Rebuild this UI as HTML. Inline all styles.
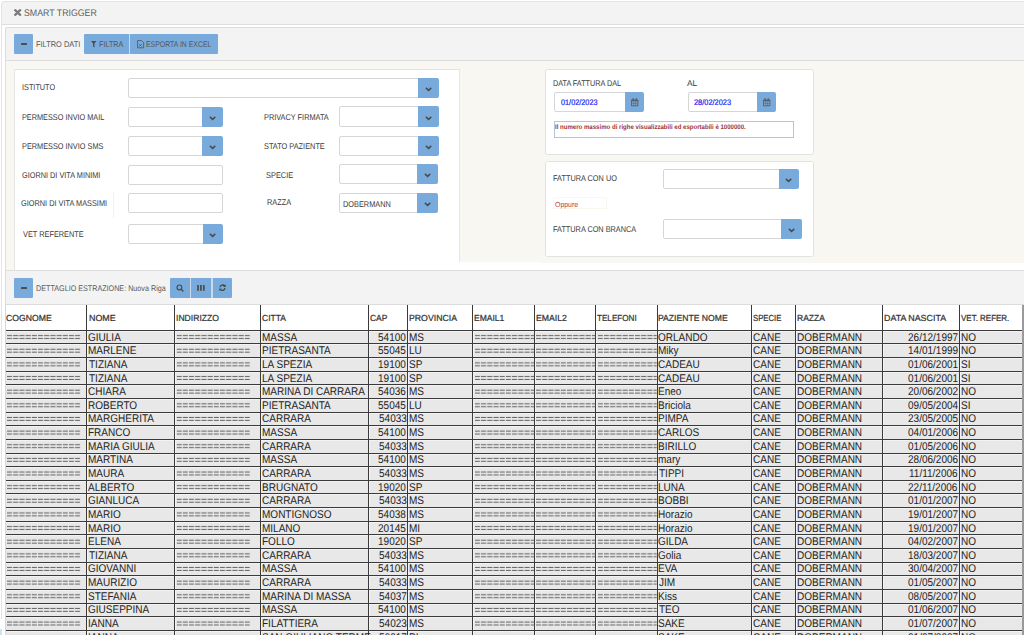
<!DOCTYPE html>
<html><head><meta charset="utf-8"><title>Smart Trigger</title><style>
html,body{margin:0;padding:0}
body{width:1024px;height:635px;overflow:hidden;background:#fff;font-family:"Liberation Sans",sans-serif;position:relative;text-rendering:geometricPrecision}
.a{position:absolute;box-sizing:border-box}
.t{position:absolute;white-space:nowrap;line-height:normal}
svg{position:absolute;overflow:visible}
</style></head><body>
<div class="a" style="left:1.00px;top:1.00px;width:1099.00px;height:24.00px;background:#f3f3f3;border:1px solid #e4e4e4;border-bottom:1px solid #dedede;border-radius:3.5px 0 0 0"></div>
<div class="a" style="left:1.00px;top:25.00px;width:1.00px;height:594.00px;background:#e4e4e4"></div>
<div class="a" style="left:0.00px;top:629.00px;width:2.00px;height:6.00px;background:#cfe3f0"></div>
<svg style="left:13.6px;top:9.3px" width="7.4" height="7" viewBox="0 0 7.4 7"><path d="M1.2 1.2 L6.2 5.8 M6.2 1.2 L1.2 5.8" stroke="#7a7a7a" stroke-width="2.3" stroke-linecap="round"/></svg>
<div class="t" style="left:24.41px;top:8.00px;font-size:9.6px;color:#606060;font-weight:normal;transform:scaleX(0.9171);transform-origin:0 0;">SMART TRIGGER</div>
<div class="a" style="left:5.00px;top:27.00px;width:1095.00px;height:34.00px;background:#f3f3f3;border:1px solid #dcdcdc;border-radius:2px 0 0 0"></div>
<div class="a" style="left:5.00px;top:60.00px;width:1.00px;height:211.00px;background:#dedede"></div>
<div class="a" style="left:6.00px;top:61.00px;width:453.00px;height:210.00px;background:#f8f7f2"></div>
<div class="a" style="left:459.00px;top:61.00px;width:80.00px;height:200.50px;background:#f8f7f2"></div>
<div class="a" style="left:539.00px;top:61.00px;width:485.00px;height:201.50px;background:#f8f7f2"></div>
<div class="a" style="left:13.50px;top:69.20px;width:446.00px;height:201.80px;background:#fff;border:1px solid #e4e4e4;border-bottom:none;border-right:none;border-radius:2px 0 0 0"></div>
<div class="a" style="left:459.00px;top:69.50px;width:1.00px;height:192.00px;background:#e6e6e6"></div>
<div class="a" style="left:14.00px;top:34.00px;width:19.40px;height:19.80px;background:#78abdb;border-radius:1.2px"></div>
<div class="a" style="left:20.60px;top:43.20px;width:6.20px;height:1.80px;background:#4d4d4d;border-radius:0.6px"></div>
<div class="t" style="left:36.46px;top:40.00px;font-size:8.2px;color:#555;font-weight:normal;transform:scaleX(0.9076);transform-origin:0 0;">FILTRO DATI</div>
<div class="a" style="left:84.00px;top:34.00px;width:44.90px;height:19.80px;background:#78abdb;border-radius:1.2px 0 0 1.2px"></div>
<div class="a" style="left:128.90px;top:34.00px;width:1.20px;height:19.80px;background:#c9d9e8"></div>
<div class="a" style="left:130.10px;top:34.00px;width:87.60px;height:19.80px;background:#78abdb;border-radius:0 1.2px 1.2px 0"></div>
<svg style="left:91px;top:40.6px" width="5.6" height="6.4" viewBox="0 0 5.6 6.4"><path d="M0 0 H5.6 L3.5 2.5 V6.4 L2.1 5.5 V2.5 Z" fill="#4d4d4d"/></svg>
<div class="t" style="left:98.57px;top:40.00px;font-size:8.2px;color:#555;font-weight:normal;transform:scaleX(0.8847);transform-origin:0 0;">FILTRA</div>
<svg style="left:136.6px;top:39.6px" width="7.2" height="8.4" viewBox="0 0 7.2 8.4"><path d="M0.55 0.55 H4.5 L6.65 2.7 V7.85 H0.55 Z" fill="none" stroke="#5a5a5a" stroke-width="0.9"/><path d="M2.3 4.1 L4.6 6.6 M4.6 4.1 L2.3 6.6" stroke="#5a5a5a" stroke-width="0.8"/></svg>
<div class="t" style="left:145.56px;top:40.00px;font-size:8.2px;color:#555;font-weight:normal;transform:scaleX(0.8433);transform-origin:0 0;">ESPORTA IN EXCEL</div>
<div class="t" style="left:22.20px;top:82.00px;font-size:8.4px;color:#383838;font-weight:normal;transform:scaleX(0.8719);transform-origin:0 0;">ISTITUTO</div>
<div class="a" style="left:127.80px;top:78.20px;width:291.60px;height:19.60px;background:#fff;border:1px solid #d6d6d6;border-radius:2px 0 0 2px"></div>
<div class="a" style="left:418.40px;top:78.20px;width:20.50px;height:19.60px;background:#78abdb;border-radius:0 2px 2px 0"></div>
<svg style="left:425.05px;top:86.80px" width="7.2" height="4.4" viewBox="0 0 7.2 4.4"><path d="M0.9 0.9 L3.6 3.4 L6.3 0.9" fill="none" stroke="#4a4a4a" stroke-width="1.45"/></svg>
<div class="t" style="left:22.36px;top:112.00px;font-size:8.4px;color:#383838;font-weight:normal;transform:scaleX(0.8713);transform-origin:0 0;">PERMESSO INVIO MAIL</div>
<div class="a" style="left:127.80px;top:106.70px;width:75.10px;height:20.30px;background:#fff;border:1px solid #d6d6d6;border-radius:2px 0 0 2px"></div>
<div class="a" style="left:201.90px;top:106.70px;width:20.90px;height:20.30px;background:#78abdb;border-radius:0 2px 2px 0"></div>
<svg style="left:208.75px;top:115.65px" width="7.2" height="4.4" viewBox="0 0 7.2 4.4"><path d="M0.9 0.9 L3.6 3.4 L6.3 0.9" fill="none" stroke="#4a4a4a" stroke-width="1.45"/></svg>
<div class="t" style="left:22.26px;top:141.00px;font-size:8.4px;color:#383838;font-weight:normal;transform:scaleX(0.8742);transform-origin:0 0;">PERMESSO INVIO SMS</div>
<div class="a" style="left:127.80px;top:136.00px;width:75.10px;height:20.10px;background:#fff;border:1px solid #d6d6d6;border-radius:2px 0 0 2px"></div>
<div class="a" style="left:201.90px;top:136.00px;width:20.90px;height:20.10px;background:#78abdb;border-radius:0 2px 2px 0"></div>
<svg style="left:208.75px;top:144.85px" width="7.2" height="4.4" viewBox="0 0 7.2 4.4"><path d="M0.9 0.9 L3.6 3.4 L6.3 0.9" fill="none" stroke="#4a4a4a" stroke-width="1.45"/></svg>
<div class="t" style="left:22.46px;top:170.00px;font-size:8.4px;color:#383838;font-weight:normal;transform:scaleX(0.8746);transform-origin:0 0;">GIORNI DI VITA MINIMI</div>
<div class="a" style="left:127.80px;top:165.10px;width:95.20px;height:20.20px;background:#fff;border:1px solid #d6d6d6;border-radius:2px"></div>
<div class="t" style="left:21.45px;top:198.00px;font-size:8.4px;color:#383838;font-weight:normal;transform:scaleX(0.8778);transform-origin:0 0;">GIORNI DI VITA MASSIMI</div>
<div class="a" style="left:112.60px;top:192.00px;width:1.00px;height:25.50px;background:#f2f0e8"></div>
<div class="a" style="left:127.80px;top:193.30px;width:95.20px;height:20.20px;background:#fff;border:1px solid #d6d6d6;border-radius:2px"></div>
<div class="t" style="left:23.16px;top:229.00px;font-size:8.4px;color:#383838;font-weight:normal;transform:scaleX(0.8769);transform-origin:0 0;">VET REFERENTE</div>
<div class="a" style="left:128.30px;top:224.30px;width:75.50px;height:20.20px;background:#fff;border:1px solid #d6d6d6;border-radius:2px 0 0 2px"></div>
<div class="a" style="left:202.80px;top:224.30px;width:20.10px;height:20.20px;background:#78abdb;border-radius:0 2px 2px 0"></div>
<svg style="left:209.25px;top:233.20px" width="7.2" height="4.4" viewBox="0 0 7.2 4.4"><path d="M0.9 0.9 L3.6 3.4 L6.3 0.9" fill="none" stroke="#4a4a4a" stroke-width="1.45"/></svg>
<div class="t" style="left:263.86px;top:112.00px;font-size:8.4px;color:#383838;font-weight:normal;transform:scaleX(0.8771);transform-origin:0 0;">PRIVACY FIRMATA</div>
<div class="a" style="left:338.70px;top:106.30px;width:80.00px;height:20.80px;background:#fff;border:1px solid #d6d6d6;border-radius:2px 0 0 2px"></div>
<div class="a" style="left:417.70px;top:106.30px;width:21.20px;height:20.80px;background:#78abdb;border-radius:0 2px 2px 0"></div>
<svg style="left:424.70px;top:115.50px" width="7.2" height="4.4" viewBox="0 0 7.2 4.4"><path d="M0.9 0.9 L3.6 3.4 L6.3 0.9" fill="none" stroke="#4a4a4a" stroke-width="1.45"/></svg>
<div class="t" style="left:263.74px;top:141.00px;font-size:8.4px;color:#383838;font-weight:normal;transform:scaleX(0.8786);transform-origin:0 0;">STATO PAZIENTE</div>
<div class="a" style="left:338.70px;top:136.20px;width:80.00px;height:19.90px;background:#fff;border:1px solid #d6d6d6;border-radius:2px 0 0 2px"></div>
<div class="a" style="left:417.70px;top:136.20px;width:21.20px;height:19.90px;background:#78abdb;border-radius:0 2px 2px 0"></div>
<svg style="left:424.70px;top:144.95px" width="7.2" height="4.4" viewBox="0 0 7.2 4.4"><path d="M0.9 0.9 L3.6 3.4 L6.3 0.9" fill="none" stroke="#4a4a4a" stroke-width="1.45"/></svg>
<div class="t" style="left:266.03px;top:170.00px;font-size:8.4px;color:#383838;font-weight:normal;transform:scaleX(0.8872);transform-origin:0 0;">SPECIE</div>
<div class="a" style="left:338.60px;top:164.40px;width:79.10px;height:20.10px;background:#fff;border:1px solid #d6d6d6;border-radius:2px 0 0 2px"></div>
<div class="a" style="left:416.70px;top:164.40px;width:21.20px;height:20.10px;background:#78abdb;border-radius:0 2px 2px 0"></div>
<svg style="left:423.70px;top:173.25px" width="7.2" height="4.4" viewBox="0 0 7.2 4.4"><path d="M0.9 0.9 L3.6 3.4 L6.3 0.9" fill="none" stroke="#4a4a4a" stroke-width="1.45"/></svg>
<div class="t" style="left:267.35px;top:197.00px;font-size:8.4px;color:#383838;font-weight:normal;transform:scaleX(0.8810);transform-origin:0 0;">RAZZA</div>
<div class="a" style="left:338.60px;top:192.80px;width:79.10px;height:20.70px;background:#fff;border:1px solid #d6d6d6;border-radius:2px 0 0 2px"></div>
<div class="a" style="left:416.70px;top:192.80px;width:21.20px;height:20.70px;background:#78abdb;border-radius:0 2px 2px 0"></div>
<svg style="left:423.70px;top:201.95px" width="7.2" height="4.4" viewBox="0 0 7.2 4.4"><path d="M0.9 0.9 L3.6 3.4 L6.3 0.9" fill="none" stroke="#4a4a4a" stroke-width="1.45"/></svg>
<div class="t" style="left:343.26px;top:199.00px;font-size:8.4px;color:#383838;font-weight:normal;transform:scaleX(0.8778);transform-origin:0 0;">DOBERMANN</div>
<div class="a" style="left:545.00px;top:69.30px;width:268.60px;height:85.30px;background:#fff;border:1px solid #e2e2e2;border-radius:2.5px"></div>
<div class="t" style="left:553.46px;top:78.00px;font-size:8.4px;color:#383838;font-weight:normal;transform:scaleX(0.8648);transform-origin:0 0;">DATA FATTURA DAL</div>
<div class="a" style="left:553.60px;top:92.00px;width:72.00px;height:19.70px;background:#fff;border:1px solid #d6d6d6;border-radius:2px 0 0 2px"></div>
<div class="a" style="left:624.60px;top:92.00px;width:19.90px;height:19.70px;background:#78abdb;border-radius:0 2px 2px 0"></div>
<svg style="left:630.85px;top:97.75px" width="7.4" height="8.2" viewBox="0 0 7.4 8.2"><rect x="0" y="1.5" width="7.4" height="6.7" rx="0.7" fill="#56606c"/><rect x="0.9" y="3.3" width="5.6" height="4.0" fill="#86a9cc"/><path d="M0.9 5.3 H6.5 M2.75 3.3 V7.3 M4.65 3.3 V7.3" stroke="#56606c" stroke-width="0.55"/><rect x="1.5" y="0.1" width="1.1" height="2.2" rx="0.4" fill="#56606c"/><rect x="4.8" y="0.1" width="1.1" height="2.2" rx="0.4" fill="#56606c"/></svg>
<div class="t" style="left:560.96px;top:98.00px;font-size:8.0px;color:#1a1cf2;font-weight:normal;transform:scaleX(0.9125);transform-origin:0 0;-webkit-text-stroke:0.2px #1a1cf2;">01/02/2023</div>
<div class="t" style="left:686.91px;top:78.00px;font-size:8.4px;color:#383838;font-weight:normal;">AL</div>
<div class="a" style="left:687.60px;top:92.00px;width:70.00px;height:19.70px;background:#fff;border:1px solid #d6d6d6;border-radius:2px 0 0 2px"></div>
<div class="a" style="left:756.60px;top:92.00px;width:19.50px;height:19.70px;background:#78abdb;border-radius:0 2px 2px 0"></div>
<svg style="left:762.65px;top:97.75px" width="7.4" height="8.2" viewBox="0 0 7.4 8.2"><rect x="0" y="1.5" width="7.4" height="6.7" rx="0.7" fill="#56606c"/><rect x="0.9" y="3.3" width="5.6" height="4.0" fill="#86a9cc"/><path d="M0.9 5.3 H6.5 M2.75 3.3 V7.3 M4.65 3.3 V7.3" stroke="#56606c" stroke-width="0.55"/><rect x="1.5" y="0.1" width="1.1" height="2.2" rx="0.4" fill="#56606c"/><rect x="4.8" y="0.1" width="1.1" height="2.2" rx="0.4" fill="#56606c"/></svg>
<div class="t" style="left:694.49px;top:98.00px;font-size:8.0px;color:#1a1cf2;font-weight:normal;transform:scaleX(0.9245);transform-origin:0 0;-webkit-text-stroke:0.2px #1a1cf2;">28/02/2023</div>
<div class="a" style="left:553.60px;top:121.10px;width:240.20px;height:16.50px;background:#fff;border:1px solid #afc6de"></div>
<div class="t" style="left:555.49px;top:124.00px;font-size:6.6px;color:#a03535;font-weight:bold;transform:scaleX(0.9196);transform-origin:0 0;">Il numero massimo di righe visualizzabili ed esportabili è 1000000.</div>
<div class="a" style="left:544.80px;top:160.60px;width:269.40px;height:96.30px;background:#fff;border:1px solid #e2e2e2;border-radius:2.5px"></div>
<div class="t" style="left:552.53px;top:173.00px;font-size:8.4px;color:#383838;font-weight:normal;transform:scaleX(0.8767);transform-origin:0 0;">FATTURA CON UO</div>
<div class="a" style="left:662.60px;top:168.90px;width:117.00px;height:19.70px;background:#fff;border:1px solid #d6d6d6;border-radius:2px 0 0 2px"></div>
<div class="a" style="left:778.60px;top:168.90px;width:20.90px;height:19.70px;background:#78abdb;border-radius:0 2px 2px 0"></div>
<svg style="left:785.45px;top:177.55px" width="7.2" height="4.4" viewBox="0 0 7.2 4.4"><path d="M0.9 0.9 L3.6 3.4 L6.3 0.9" fill="none" stroke="#4a4a4a" stroke-width="1.45"/></svg>
<div class="a" style="left:552.60px;top:197.30px;width:54.80px;height:12.10px;background:#fff;border:1px solid #faf7ef"></div>
<div class="t" style="left:554.70px;top:200.00px;font-size:7.4px;color:#b04444;font-weight:normal;transform:scaleX(0.9383);transform-origin:0 0;">Oppure</div>
<div class="t" style="left:552.53px;top:224.00px;font-size:8.4px;color:#383838;font-weight:normal;transform:scaleX(0.8727);transform-origin:0 0;">FATTURA CON BRANCA</div>
<div class="a" style="left:662.60px;top:218.90px;width:119.00px;height:20.20px;background:#fff;border:1px solid #d6d6d6;border-radius:2px 0 0 2px"></div>
<div class="a" style="left:780.60px;top:218.90px;width:21.90px;height:20.20px;background:#78abdb;border-radius:0 2px 2px 0"></div>
<svg style="left:787.95px;top:227.80px" width="7.2" height="4.4" viewBox="0 0 7.2 4.4"><path d="M0.9 0.9 L3.6 3.4 L6.3 0.9" fill="none" stroke="#4a4a4a" stroke-width="1.45"/></svg>
<div class="a" style="left:5.00px;top:270.20px;width:1095.00px;height:34.60px;background:#f3f3f3;border:1px solid #dcdcdc;border-top:1.6px solid #dfdfdf"></div>
<div class="a" style="left:14.00px;top:278.00px;width:19.40px;height:19.60px;background:#78abdb;border-radius:1.2px"></div>
<div class="a" style="left:20.60px;top:287.10px;width:6.20px;height:1.80px;background:#4d4d4d;border-radius:0.6px"></div>
<div class="t" style="left:36.39px;top:284.00px;font-size:8.2px;color:#5a5a5a;font-weight:normal;transform:scaleX(0.8783);transform-origin:0 0;">DETTAGLIO ESTRAZIONE: Nuova Riga</div>
<div class="a" style="left:169.90px;top:277.90px;width:19.70px;height:19.70px;background:#78abdb;border-radius:1.2px 0 0 1.2px"></div>
<div class="a" style="left:189.60px;top:277.90px;width:1.30px;height:19.70px;background:#c9d9e8"></div>
<div class="a" style="left:211.10px;top:277.90px;width:1.50px;height:19.70px;background:#c9d9e8"></div>
<div class="a" style="left:190.90px;top:277.90px;width:20.20px;height:19.70px;background:#78abdb;border-radius:0"></div>
<div class="a" style="left:212.60px;top:277.90px;width:19.40px;height:19.70px;background:#78abdb;border-radius:0 1.2px 1.2px 0"></div>
<svg style="left:175.6px;top:284.2px" width="8" height="8" viewBox="0 0 8 8"><circle cx="3.4" cy="3.4" r="2.4" fill="none" stroke="#4a4a4a" stroke-width="1.15"/><path d="M5.2 5.2 L7.0 7.0" stroke="#4a4a4a" stroke-width="1.4" stroke-linecap="round"/></svg>
<svg style="left:197px;top:285px" width="8" height="5.8" viewBox="0 0 8 5.8"><rect x="0.1" y="0" width="1.8" height="5.8" fill="#505050"/><rect x="3.0" y="0" width="1.8" height="5.8" fill="#505050"/><rect x="5.95" y="0" width="1.8" height="5.8" fill="#505050"/></svg>
<svg style="left:218.6px;top:284.3px" width="7" height="7.4" viewBox="0 0 7 7.4"><path d="M1.0 3.3 A2.6 2.6 0 0 1 5.7 2.1" fill="none" stroke="#464646" stroke-width="1.3"/><path d="M6.0 4.1 A2.6 2.6 0 0 1 1.3 5.3" fill="none" stroke="#464646" stroke-width="1.3"/><path d="M4.2 2.7 L6.8 2.9 L6.6 0.3 Z" fill="#464646"/><path d="M2.8 4.7 L0.2 4.5 L0.4 7.1 Z" fill="#464646"/></svg>
<div class="a" style="left:5.00px;top:304.60px;width:1017.20px;height:330.40px;background:#fff"></div>
<div class="a" style="left:5.00px;top:330.30px;width:1017.20px;height:315.72px;background:#e8e8e8"></div>
<div class="a" style="left:5.00px;top:330.80px;width:1017.20px;height:1.00px;background:#f3f3f3"></div>
<div class="a" style="left:5.00px;top:344.44px;width:1017.20px;height:1.00px;background:#f3f3f3"></div>
<div class="a" style="left:5.00px;top:358.08px;width:1017.20px;height:1.00px;background:#f3f3f3"></div>
<div class="a" style="left:5.00px;top:371.72px;width:1017.20px;height:1.00px;background:#f3f3f3"></div>
<div class="a" style="left:5.00px;top:385.36px;width:1017.20px;height:1.00px;background:#f3f3f3"></div>
<div class="a" style="left:5.00px;top:399.00px;width:1017.20px;height:1.00px;background:#f3f3f3"></div>
<div class="a" style="left:5.00px;top:412.64px;width:1017.20px;height:1.00px;background:#f3f3f3"></div>
<div class="a" style="left:5.00px;top:426.28px;width:1017.20px;height:1.00px;background:#f3f3f3"></div>
<div class="a" style="left:5.00px;top:439.92px;width:1017.20px;height:1.00px;background:#f3f3f3"></div>
<div class="a" style="left:5.00px;top:453.56px;width:1017.20px;height:1.00px;background:#f3f3f3"></div>
<div class="a" style="left:5.00px;top:467.20px;width:1017.20px;height:1.00px;background:#f3f3f3"></div>
<div class="a" style="left:5.00px;top:480.84px;width:1017.20px;height:1.00px;background:#f3f3f3"></div>
<div class="a" style="left:5.00px;top:494.48px;width:1017.20px;height:1.00px;background:#f3f3f3"></div>
<div class="a" style="left:5.00px;top:508.12px;width:1017.20px;height:1.00px;background:#f3f3f3"></div>
<div class="a" style="left:5.00px;top:521.76px;width:1017.20px;height:1.00px;background:#f3f3f3"></div>
<div class="a" style="left:5.00px;top:535.40px;width:1017.20px;height:1.00px;background:#f3f3f3"></div>
<div class="a" style="left:5.00px;top:549.04px;width:1017.20px;height:1.00px;background:#f3f3f3"></div>
<div class="a" style="left:5.00px;top:562.68px;width:1017.20px;height:1.00px;background:#f3f3f3"></div>
<div class="a" style="left:5.00px;top:576.32px;width:1017.20px;height:1.00px;background:#f3f3f3"></div>
<div class="a" style="left:5.00px;top:589.96px;width:1017.20px;height:1.00px;background:#f3f3f3"></div>
<div class="a" style="left:5.00px;top:603.60px;width:1017.20px;height:1.00px;background:#f3f3f3"></div>
<div class="a" style="left:5.00px;top:617.24px;width:1017.20px;height:1.00px;background:#f3f3f3"></div>
<div class="a" style="left:5.00px;top:630.88px;width:1017.20px;height:1.00px;background:#f3f3f3"></div>
<div class="a" style="left:87.30px;top:330.30px;width:1.00px;height:304.70px;background:#f3f3f3"></div>
<div class="a" style="left:175.00px;top:330.30px;width:1.00px;height:304.70px;background:#f3f3f3"></div>
<div class="a" style="left:261.00px;top:330.30px;width:1.00px;height:304.70px;background:#f3f3f3"></div>
<div class="a" style="left:369.00px;top:330.30px;width:1.00px;height:304.70px;background:#f3f3f3"></div>
<div class="a" style="left:408.10px;top:330.30px;width:1.00px;height:304.70px;background:#f3f3f3"></div>
<div class="a" style="left:473.10px;top:330.30px;width:1.00px;height:304.70px;background:#f3f3f3"></div>
<div class="a" style="left:535.10px;top:330.30px;width:1.00px;height:304.70px;background:#f3f3f3"></div>
<div class="a" style="left:596.00px;top:330.30px;width:1.00px;height:304.70px;background:#f3f3f3"></div>
<div class="a" style="left:657.70px;top:330.30px;width:1.00px;height:304.70px;background:#f3f3f3"></div>
<div class="a" style="left:752.20px;top:330.30px;width:1.00px;height:304.70px;background:#f3f3f3"></div>
<div class="a" style="left:796.00px;top:330.30px;width:1.00px;height:304.70px;background:#f3f3f3"></div>
<div class="a" style="left:883.00px;top:330.30px;width:1.00px;height:304.70px;background:#f3f3f3"></div>
<div class="a" style="left:959.90px;top:330.30px;width:1.00px;height:304.70px;background:#f3f3f3"></div>
<div class="a" style="left:5.00px;top:329.80px;width:1017.20px;height:1.00px;background:#3a3a3a"></div>
<div class="a" style="left:5.00px;top:343.44px;width:1017.20px;height:1.00px;background:#3a3a3a"></div>
<div class="a" style="left:5.00px;top:357.08px;width:1017.20px;height:1.00px;background:#3a3a3a"></div>
<div class="a" style="left:5.00px;top:370.72px;width:1017.20px;height:1.00px;background:#3a3a3a"></div>
<div class="a" style="left:5.00px;top:384.36px;width:1017.20px;height:1.00px;background:#3a3a3a"></div>
<div class="a" style="left:5.00px;top:398.00px;width:1017.20px;height:1.00px;background:#3a3a3a"></div>
<div class="a" style="left:5.00px;top:411.64px;width:1017.20px;height:1.00px;background:#3a3a3a"></div>
<div class="a" style="left:5.00px;top:425.28px;width:1017.20px;height:1.00px;background:#3a3a3a"></div>
<div class="a" style="left:5.00px;top:438.92px;width:1017.20px;height:1.00px;background:#3a3a3a"></div>
<div class="a" style="left:5.00px;top:452.56px;width:1017.20px;height:1.00px;background:#3a3a3a"></div>
<div class="a" style="left:5.00px;top:466.20px;width:1017.20px;height:1.00px;background:#3a3a3a"></div>
<div class="a" style="left:5.00px;top:479.84px;width:1017.20px;height:1.00px;background:#3a3a3a"></div>
<div class="a" style="left:5.00px;top:493.48px;width:1017.20px;height:1.00px;background:#3a3a3a"></div>
<div class="a" style="left:5.00px;top:507.12px;width:1017.20px;height:1.00px;background:#3a3a3a"></div>
<div class="a" style="left:5.00px;top:520.76px;width:1017.20px;height:1.00px;background:#3a3a3a"></div>
<div class="a" style="left:5.00px;top:534.40px;width:1017.20px;height:1.00px;background:#3a3a3a"></div>
<div class="a" style="left:5.00px;top:548.04px;width:1017.20px;height:1.00px;background:#3a3a3a"></div>
<div class="a" style="left:5.00px;top:561.68px;width:1017.20px;height:1.00px;background:#3a3a3a"></div>
<div class="a" style="left:5.00px;top:575.32px;width:1017.20px;height:1.00px;background:#3a3a3a"></div>
<div class="a" style="left:5.00px;top:588.96px;width:1017.20px;height:1.00px;background:#3a3a3a"></div>
<div class="a" style="left:5.00px;top:602.60px;width:1017.20px;height:1.00px;background:#3a3a3a"></div>
<div class="a" style="left:5.00px;top:616.24px;width:1017.20px;height:1.00px;background:#3a3a3a"></div>
<div class="a" style="left:5.00px;top:629.88px;width:1017.20px;height:1.00px;background:#3a3a3a"></div>
<div class="a" style="left:5.00px;top:643.52px;width:1017.20px;height:1.00px;background:#3a3a3a"></div>
<div class="a" style="left:86.30px;top:304.60px;width:1.00px;height:330.40px;background:#3a3a3a"></div>
<div class="a" style="left:174.00px;top:304.60px;width:1.00px;height:330.40px;background:#3a3a3a"></div>
<div class="a" style="left:260.00px;top:304.60px;width:1.00px;height:330.40px;background:#3a3a3a"></div>
<div class="a" style="left:368.00px;top:304.60px;width:1.00px;height:330.40px;background:#3a3a3a"></div>
<div class="a" style="left:407.10px;top:304.60px;width:1.00px;height:330.40px;background:#3a3a3a"></div>
<div class="a" style="left:472.10px;top:304.60px;width:1.00px;height:330.40px;background:#3a3a3a"></div>
<div class="a" style="left:534.10px;top:304.60px;width:1.00px;height:330.40px;background:#3a3a3a"></div>
<div class="a" style="left:595.00px;top:304.60px;width:1.00px;height:330.40px;background:#3a3a3a"></div>
<div class="a" style="left:656.70px;top:304.60px;width:1.00px;height:330.40px;background:#3a3a3a"></div>
<div class="a" style="left:751.20px;top:304.60px;width:1.00px;height:330.40px;background:#3a3a3a"></div>
<div class="a" style="left:795.00px;top:304.60px;width:1.00px;height:330.40px;background:#3a3a3a"></div>
<div class="a" style="left:882.00px;top:304.60px;width:1.00px;height:330.40px;background:#3a3a3a"></div>
<div class="a" style="left:958.90px;top:304.60px;width:1.00px;height:330.40px;background:#3a3a3a"></div>
<div class="a" style="left:5.00px;top:304.60px;width:1.00px;height:330.40px;background:#d6d6d6"></div>
<div class="a" style="left:1022.20px;top:304.60px;width:1.80px;height:330.40px;background:#9a9a9a"></div>
<svg style="left:0;top:0" width="1024" height="635" viewBox="0 0 1024 635"><defs><pattern id="eq" patternUnits="userSpaceOnUse" x="0" y="0" width="6.2" height="13.64"><rect x="0" y="4.8" width="5.1" height="0.95" fill="#5a5a5a"/><rect x="0" y="7.7" width="5.1" height="0.95" fill="#5a5a5a"/></pattern></defs><g transform="translate(7.00,330.30)"><rect x="0" y="0" width="73.30" height="313.72" fill="url(#eq)"/></g><g transform="translate(176.60,330.30)"><rect x="0" y="0" width="73.30" height="313.72" fill="url(#eq)"/></g><g transform="translate(474.90,330.30)"><rect x="0" y="0" width="59.20" height="313.72" fill="url(#eq)"/></g><g transform="translate(536.00,330.30)"><rect x="0" y="0" width="59.00" height="313.72" fill="url(#eq)"/></g><g transform="translate(597.80,330.30)"><rect x="0" y="0" width="58.90" height="313.72" fill="url(#eq)"/></g></svg>
<div class="t" style="left:6.25px;top:313.00px;font-size:8.8px;color:#333;font-weight:normal;transform:scaleX(0.9835);transform-origin:0 0;-webkit-text-stroke:0.22px #333;">COGNOME</div>
<div class="t" style="left:88.56px;top:313.00px;font-size:8.8px;color:#333;font-weight:normal;transform:scaleX(1.0090);transform-origin:0 0;-webkit-text-stroke:0.22px #333;">NOME</div>
<div class="t" style="left:175.77px;top:313.00px;font-size:8.8px;color:#333;font-weight:normal;transform:scaleX(0.9778);transform-origin:0 0;-webkit-text-stroke:0.22px #333;">INDIRIZZO</div>
<div class="t" style="left:261.76px;top:313.00px;font-size:8.8px;color:#333;font-weight:normal;transform:scaleX(0.9697);transform-origin:0 0;-webkit-text-stroke:0.22px #333;">CITTA</div>
<div class="t" style="left:369.76px;top:313.00px;font-size:8.8px;color:#333;font-weight:normal;transform:scaleX(0.9634);transform-origin:0 0;-webkit-text-stroke:0.22px #333;">CAP</div>
<div class="t" style="left:409.22px;top:313.00px;font-size:8.8px;color:#333;font-weight:normal;transform:scaleX(0.9917);transform-origin:0 0;-webkit-text-stroke:0.22px #333;">PROVINCIA</div>
<div class="t" style="left:473.80px;top:313.00px;font-size:8.8px;color:#333;font-weight:normal;transform:scaleX(0.9700);transform-origin:0 0;-webkit-text-stroke:0.22px #333;">EMAIL1</div>
<div class="t" style="left:535.64px;top:313.00px;font-size:8.8px;color:#333;font-weight:normal;transform:scaleX(0.9894);transform-origin:0 0;-webkit-text-stroke:0.22px #333;">EMAIL2</div>
<div class="t" style="left:597.09px;top:313.00px;font-size:8.8px;color:#333;font-weight:normal;transform:scaleX(0.9224);transform-origin:0 0;-webkit-text-stroke:0.22px #333;">TELEFONI</div>
<div class="t" style="left:658.43px;top:313.00px;font-size:8.8px;color:#333;font-weight:normal;transform:scaleX(0.9789);transform-origin:0 0;-webkit-text-stroke:0.22px #333;">PAZIENTE NOME</div>
<div class="t" style="left:753.12px;top:313.00px;font-size:8.8px;color:#333;font-weight:normal;transform:scaleX(0.8808);transform-origin:0 0;-webkit-text-stroke:0.22px #333;">SPECIE</div>
<div class="t" style="left:796.74px;top:313.00px;font-size:8.8px;color:#333;font-weight:normal;transform:scaleX(0.9700);transform-origin:0 0;-webkit-text-stroke:0.22px #333;">RAZZA</div>
<div class="t" style="left:883.81px;top:313.00px;font-size:8.8px;color:#333;font-weight:normal;transform:scaleX(1.0077);transform-origin:0 0;-webkit-text-stroke:0.22px #333;">DATA NASCITA</div>
<div class="t" style="left:961.14px;top:313.00px;font-size:8.8px;color:#333;font-weight:normal;transform:scaleX(0.9067);transform-origin:0 0;-webkit-text-stroke:0.22px #333;">VET. REFER.</div>
<div class="t" style="left:88.27px;top:332.00px;font-size:11.2px;color:#242424;font-weight:normal;transform:scaleX(0.8950);transform-origin:0 0;">GIULIA</div>
<div class="t" style="left:261.69px;top:332.00px;font-size:11.2px;color:#242424;font-weight:normal;transform:scaleX(0.8950);transform-origin:0 0;">MASSA</div>
<div class="t" style="left:378.21px;top:332.00px;font-size:11.2px;color:#242424;font-weight:normal;transform:scaleX(0.8950);transform-origin:0 0;">54100</div>
<div class="t" style="left:408.89px;top:332.00px;font-size:11.2px;color:#242424;font-weight:normal;transform:scaleX(0.8950);transform-origin:0 0;">MS</div>
<div class="t" style="left:658.49px;top:332.00px;font-size:11.2px;color:#242424;font-weight:normal;transform:scaleX(0.8950);transform-origin:0 0;">ORLANDO</div>
<div class="t" style="left:753.07px;top:332.00px;font-size:11.2px;color:#242424;font-weight:normal;transform:scaleX(0.8950);transform-origin:0 0;">CANE</div>
<div class="t" style="left:796.97px;top:332.00px;font-size:11.2px;color:#242424;font-weight:normal;transform:scaleX(0.8950);transform-origin:0 0;">DOBERMANN</div>
<div class="t" style="left:907.81px;top:332.00px;font-size:11.2px;color:#242424;font-weight:normal;transform:scaleX(0.8950);transform-origin:0 0;">26/12/1997</div>
<div class="t" style="left:960.99px;top:332.00px;font-size:11.2px;color:#242424;font-weight:normal;transform:scaleX(0.8950);transform-origin:0 0;">NO</div>
<div class="t" style="left:88.19px;top:345.00px;font-size:11.2px;color:#242424;font-weight:normal;transform:scaleX(0.8950);transform-origin:0 0;">MARLENE</div>
<div class="t" style="left:261.67px;top:345.00px;font-size:11.2px;color:#242424;font-weight:normal;transform:scaleX(0.8950);transform-origin:0 0;">PIETRASANTA</div>
<div class="t" style="left:378.22px;top:345.00px;font-size:11.2px;color:#242424;font-weight:normal;transform:scaleX(0.8950);transform-origin:0 0;">55045</div>
<div class="t" style="left:408.88px;top:345.00px;font-size:11.2px;color:#242424;font-weight:normal;transform:scaleX(0.8950);transform-origin:0 0;">LU</div>
<div class="t" style="left:658.39px;top:345.00px;font-size:11.2px;color:#242424;font-weight:normal;transform:scaleX(0.8950);transform-origin:0 0;">Miky</div>
<div class="t" style="left:753.07px;top:345.00px;font-size:11.2px;color:#242424;font-weight:normal;transform:scaleX(0.8950);transform-origin:0 0;">CANE</div>
<div class="t" style="left:796.97px;top:345.00px;font-size:11.2px;color:#242424;font-weight:normal;transform:scaleX(0.8950);transform-origin:0 0;">DOBERMANN</div>
<div class="t" style="left:907.71px;top:345.00px;font-size:11.2px;color:#242424;font-weight:normal;transform:scaleX(0.8950);transform-origin:0 0;">14/01/1999</div>
<div class="t" style="left:960.99px;top:345.00px;font-size:11.2px;color:#242424;font-weight:normal;transform:scaleX(0.8950);transform-origin:0 0;">NO</div>
<div class="t" style="left:88.58px;top:359.00px;font-size:11.2px;color:#242424;font-weight:normal;transform:scaleX(0.8950);transform-origin:0 0;">TIZIANA</div>
<div class="t" style="left:261.68px;top:359.00px;font-size:11.2px;color:#242424;font-weight:normal;transform:scaleX(0.8950);transform-origin:0 0;">LA SPEZIA</div>
<div class="t" style="left:378.21px;top:359.00px;font-size:11.2px;color:#242424;font-weight:normal;transform:scaleX(0.8950);transform-origin:0 0;">19100</div>
<div class="t" style="left:408.85px;top:359.00px;font-size:11.2px;color:#242424;font-weight:normal;transform:scaleX(0.8950);transform-origin:0 0;">SP</div>
<div class="t" style="left:658.47px;top:359.00px;font-size:11.2px;color:#242424;font-weight:normal;transform:scaleX(0.8950);transform-origin:0 0;">CADEAU</div>
<div class="t" style="left:753.07px;top:359.00px;font-size:11.2px;color:#242424;font-weight:normal;transform:scaleX(0.8950);transform-origin:0 0;">CANE</div>
<div class="t" style="left:796.97px;top:359.00px;font-size:11.2px;color:#242424;font-weight:normal;transform:scaleX(0.8950);transform-origin:0 0;">DOBERMANN</div>
<div class="t" style="left:907.71px;top:359.00px;font-size:11.2px;color:#242424;font-weight:normal;transform:scaleX(0.8950);transform-origin:0 0;">01/06/2001</div>
<div class="t" style="left:960.95px;top:359.00px;font-size:11.2px;color:#242424;font-weight:normal;transform:scaleX(0.8950);transform-origin:0 0;">SI</div>
<div class="t" style="left:88.58px;top:373.00px;font-size:11.2px;color:#242424;font-weight:normal;transform:scaleX(0.8950);transform-origin:0 0;">TIZIANA</div>
<div class="t" style="left:261.68px;top:373.00px;font-size:11.2px;color:#242424;font-weight:normal;transform:scaleX(0.8950);transform-origin:0 0;">LA SPEZIA</div>
<div class="t" style="left:378.21px;top:373.00px;font-size:11.2px;color:#242424;font-weight:normal;transform:scaleX(0.8950);transform-origin:0 0;">19100</div>
<div class="t" style="left:408.85px;top:373.00px;font-size:11.2px;color:#242424;font-weight:normal;transform:scaleX(0.8950);transform-origin:0 0;">SP</div>
<div class="t" style="left:658.47px;top:373.00px;font-size:11.2px;color:#242424;font-weight:normal;transform:scaleX(0.8950);transform-origin:0 0;">CADEAU</div>
<div class="t" style="left:753.07px;top:373.00px;font-size:11.2px;color:#242424;font-weight:normal;transform:scaleX(0.8950);transform-origin:0 0;">CANE</div>
<div class="t" style="left:796.97px;top:373.00px;font-size:11.2px;color:#242424;font-weight:normal;transform:scaleX(0.8950);transform-origin:0 0;">DOBERMANN</div>
<div class="t" style="left:907.71px;top:373.00px;font-size:11.2px;color:#242424;font-weight:normal;transform:scaleX(0.8950);transform-origin:0 0;">01/06/2001</div>
<div class="t" style="left:960.95px;top:373.00px;font-size:11.2px;color:#242424;font-weight:normal;transform:scaleX(0.8950);transform-origin:0 0;">SI</div>
<div class="t" style="left:88.27px;top:386.00px;font-size:11.2px;color:#242424;font-weight:normal;transform:scaleX(0.8950);transform-origin:0 0;">CHIARA</div>
<div class="t" style="left:261.69px;top:386.00px;font-size:11.2px;color:#242424;font-weight:normal;transform:scaleX(0.8950);transform-origin:0 0;">MARINA DI CARRARA</div>
<div class="t" style="left:378.22px;top:386.00px;font-size:11.2px;color:#242424;font-weight:normal;transform:scaleX(0.8950);transform-origin:0 0;">54036</div>
<div class="t" style="left:408.89px;top:386.00px;font-size:11.2px;color:#242424;font-weight:normal;transform:scaleX(0.8950);transform-origin:0 0;">MS</div>
<div class="t" style="left:658.37px;top:386.00px;font-size:11.2px;color:#242424;font-weight:normal;transform:scaleX(0.8950);transform-origin:0 0;">Eneo</div>
<div class="t" style="left:753.07px;top:386.00px;font-size:11.2px;color:#242424;font-weight:normal;transform:scaleX(0.8950);transform-origin:0 0;">CANE</div>
<div class="t" style="left:796.97px;top:386.00px;font-size:11.2px;color:#242424;font-weight:normal;transform:scaleX(0.8950);transform-origin:0 0;">DOBERMANN</div>
<div class="t" style="left:907.79px;top:386.00px;font-size:11.2px;color:#242424;font-weight:normal;transform:scaleX(0.8950);transform-origin:0 0;">20/06/2002</div>
<div class="t" style="left:960.99px;top:386.00px;font-size:11.2px;color:#242424;font-weight:normal;transform:scaleX(0.8950);transform-origin:0 0;">NO</div>
<div class="t" style="left:88.17px;top:400.00px;font-size:11.2px;color:#242424;font-weight:normal;transform:scaleX(0.8950);transform-origin:0 0;">ROBERTO</div>
<div class="t" style="left:261.67px;top:400.00px;font-size:11.2px;color:#242424;font-weight:normal;transform:scaleX(0.8950);transform-origin:0 0;">PIETRASANTA</div>
<div class="t" style="left:378.22px;top:400.00px;font-size:11.2px;color:#242424;font-weight:normal;transform:scaleX(0.8950);transform-origin:0 0;">55045</div>
<div class="t" style="left:408.88px;top:400.00px;font-size:11.2px;color:#242424;font-weight:normal;transform:scaleX(0.8950);transform-origin:0 0;">LU</div>
<div class="t" style="left:658.37px;top:400.00px;font-size:11.2px;color:#242424;font-weight:normal;transform:scaleX(0.8950);transform-origin:0 0;">Briciola</div>
<div class="t" style="left:753.07px;top:400.00px;font-size:11.2px;color:#242424;font-weight:normal;transform:scaleX(0.8950);transform-origin:0 0;">CANE</div>
<div class="t" style="left:796.97px;top:400.00px;font-size:11.2px;color:#242424;font-weight:normal;transform:scaleX(0.8950);transform-origin:0 0;">DOBERMANN</div>
<div class="t" style="left:907.96px;top:400.00px;font-size:11.2px;color:#242424;font-weight:normal;transform:scaleX(0.8950);transform-origin:0 0;">09/05/2004</div>
<div class="t" style="left:960.95px;top:400.00px;font-size:11.2px;color:#242424;font-weight:normal;transform:scaleX(0.8950);transform-origin:0 0;">SI</div>
<div class="t" style="left:88.19px;top:413.00px;font-size:11.2px;color:#242424;font-weight:normal;transform:scaleX(0.8950);transform-origin:0 0;">MARGHERITA</div>
<div class="t" style="left:261.77px;top:413.00px;font-size:11.2px;color:#242424;font-weight:normal;transform:scaleX(0.8950);transform-origin:0 0;">CARRARA</div>
<div class="t" style="left:378.60px;top:413.00px;font-size:11.2px;color:#242424;font-weight:normal;transform:scaleX(0.8950);transform-origin:0 0;">54033</div>
<div class="t" style="left:408.89px;top:413.00px;font-size:11.2px;color:#242424;font-weight:normal;transform:scaleX(0.8950);transform-origin:0 0;">MS</div>
<div class="t" style="left:658.37px;top:413.00px;font-size:11.2px;color:#242424;font-weight:normal;transform:scaleX(0.8950);transform-origin:0 0;">PIMPA</div>
<div class="t" style="left:753.07px;top:413.00px;font-size:11.2px;color:#242424;font-weight:normal;transform:scaleX(0.8950);transform-origin:0 0;">CANE</div>
<div class="t" style="left:796.97px;top:413.00px;font-size:11.2px;color:#242424;font-weight:normal;transform:scaleX(0.8950);transform-origin:0 0;">DOBERMANN</div>
<div class="t" style="left:907.72px;top:413.00px;font-size:11.2px;color:#242424;font-weight:normal;transform:scaleX(0.8950);transform-origin:0 0;">23/05/2005</div>
<div class="t" style="left:960.99px;top:413.00px;font-size:11.2px;color:#242424;font-weight:normal;transform:scaleX(0.8950);transform-origin:0 0;">NO</div>
<div class="t" style="left:88.17px;top:427.00px;font-size:11.2px;color:#242424;font-weight:normal;transform:scaleX(0.8950);transform-origin:0 0;">FRANCO</div>
<div class="t" style="left:261.69px;top:427.00px;font-size:11.2px;color:#242424;font-weight:normal;transform:scaleX(0.8950);transform-origin:0 0;">MASSA</div>
<div class="t" style="left:378.21px;top:427.00px;font-size:11.2px;color:#242424;font-weight:normal;transform:scaleX(0.8950);transform-origin:0 0;">54100</div>
<div class="t" style="left:408.89px;top:427.00px;font-size:11.2px;color:#242424;font-weight:normal;transform:scaleX(0.8950);transform-origin:0 0;">MS</div>
<div class="t" style="left:658.47px;top:427.00px;font-size:11.2px;color:#242424;font-weight:normal;transform:scaleX(0.8950);transform-origin:0 0;">CARLOS</div>
<div class="t" style="left:753.07px;top:427.00px;font-size:11.2px;color:#242424;font-weight:normal;transform:scaleX(0.8950);transform-origin:0 0;">CANE</div>
<div class="t" style="left:796.97px;top:427.00px;font-size:11.2px;color:#242424;font-weight:normal;transform:scaleX(0.8950);transform-origin:0 0;">DOBERMANN</div>
<div class="t" style="left:907.73px;top:427.00px;font-size:11.2px;color:#242424;font-weight:normal;transform:scaleX(0.8950);transform-origin:0 0;">04/01/2006</div>
<div class="t" style="left:960.99px;top:427.00px;font-size:11.2px;color:#242424;font-weight:normal;transform:scaleX(0.8950);transform-origin:0 0;">NO</div>
<div class="t" style="left:88.19px;top:441.00px;font-size:11.2px;color:#242424;font-weight:normal;transform:scaleX(0.8950);transform-origin:0 0;">MARIA GIULIA</div>
<div class="t" style="left:261.77px;top:441.00px;font-size:11.2px;color:#242424;font-weight:normal;transform:scaleX(0.8950);transform-origin:0 0;">CARRARA</div>
<div class="t" style="left:378.60px;top:441.00px;font-size:11.2px;color:#242424;font-weight:normal;transform:scaleX(0.8950);transform-origin:0 0;">54033</div>
<div class="t" style="left:408.89px;top:441.00px;font-size:11.2px;color:#242424;font-weight:normal;transform:scaleX(0.8950);transform-origin:0 0;">MS</div>
<div class="t" style="left:658.37px;top:441.00px;font-size:11.2px;color:#242424;font-weight:normal;transform:scaleX(0.8950);transform-origin:0 0;">BIRILLO</div>
<div class="t" style="left:753.07px;top:441.00px;font-size:11.2px;color:#242424;font-weight:normal;transform:scaleX(0.8950);transform-origin:0 0;">CANE</div>
<div class="t" style="left:796.97px;top:441.00px;font-size:11.2px;color:#242424;font-weight:normal;transform:scaleX(0.8950);transform-origin:0 0;">DOBERMANN</div>
<div class="t" style="left:907.73px;top:441.00px;font-size:11.2px;color:#242424;font-weight:normal;transform:scaleX(0.8950);transform-origin:0 0;">01/05/2006</div>
<div class="t" style="left:960.99px;top:441.00px;font-size:11.2px;color:#242424;font-weight:normal;transform:scaleX(0.8950);transform-origin:0 0;">NO</div>
<div class="t" style="left:88.19px;top:454.00px;font-size:11.2px;color:#242424;font-weight:normal;transform:scaleX(0.8950);transform-origin:0 0;">MARTINA</div>
<div class="t" style="left:261.69px;top:454.00px;font-size:11.2px;color:#242424;font-weight:normal;transform:scaleX(0.8950);transform-origin:0 0;">MASSA</div>
<div class="t" style="left:378.21px;top:454.00px;font-size:11.2px;color:#242424;font-weight:normal;transform:scaleX(0.8950);transform-origin:0 0;">54100</div>
<div class="t" style="left:408.89px;top:454.00px;font-size:11.2px;color:#242424;font-weight:normal;transform:scaleX(0.8950);transform-origin:0 0;">MS</div>
<div class="t" style="left:658.49px;top:454.00px;font-size:11.2px;color:#242424;font-weight:normal;transform:scaleX(0.8950);transform-origin:0 0;">mary</div>
<div class="t" style="left:753.07px;top:454.00px;font-size:11.2px;color:#242424;font-weight:normal;transform:scaleX(0.8950);transform-origin:0 0;">CANE</div>
<div class="t" style="left:796.97px;top:454.00px;font-size:11.2px;color:#242424;font-weight:normal;transform:scaleX(0.8950);transform-origin:0 0;">DOBERMANN</div>
<div class="t" style="left:907.73px;top:454.00px;font-size:11.2px;color:#242424;font-weight:normal;transform:scaleX(0.8950);transform-origin:0 0;">28/06/2006</div>
<div class="t" style="left:960.99px;top:454.00px;font-size:11.2px;color:#242424;font-weight:normal;transform:scaleX(0.8950);transform-origin:0 0;">NO</div>
<div class="t" style="left:88.19px;top:468.00px;font-size:11.2px;color:#242424;font-weight:normal;transform:scaleX(0.8950);transform-origin:0 0;">MAURA</div>
<div class="t" style="left:261.77px;top:468.00px;font-size:11.2px;color:#242424;font-weight:normal;transform:scaleX(0.8950);transform-origin:0 0;">CARRARA</div>
<div class="t" style="left:378.60px;top:468.00px;font-size:11.2px;color:#242424;font-weight:normal;transform:scaleX(0.8950);transform-origin:0 0;">54033</div>
<div class="t" style="left:408.89px;top:468.00px;font-size:11.2px;color:#242424;font-weight:normal;transform:scaleX(0.8950);transform-origin:0 0;">MS</div>
<div class="t" style="left:658.78px;top:468.00px;font-size:11.2px;color:#242424;font-weight:normal;transform:scaleX(0.8950);transform-origin:0 0;">TIPPI</div>
<div class="t" style="left:753.07px;top:468.00px;font-size:11.2px;color:#242424;font-weight:normal;transform:scaleX(0.8950);transform-origin:0 0;">CANE</div>
<div class="t" style="left:796.97px;top:468.00px;font-size:11.2px;color:#242424;font-weight:normal;transform:scaleX(0.8950);transform-origin:0 0;">DOBERMANN</div>
<div class="t" style="left:908.94px;top:468.00px;font-size:11.2px;color:#242424;font-weight:normal;transform:scaleX(0.8950);transform-origin:0 0;">11/11/2006</div>
<div class="t" style="left:960.99px;top:468.00px;font-size:11.2px;color:#242424;font-weight:normal;transform:scaleX(0.8950);transform-origin:0 0;">NO</div>
<div class="t" style="left:88.39px;top:482.00px;font-size:11.2px;color:#242424;font-weight:normal;transform:scaleX(0.8950);transform-origin:0 0;">ALBERTO</div>
<div class="t" style="left:261.67px;top:482.00px;font-size:11.2px;color:#242424;font-weight:normal;transform:scaleX(0.8950);transform-origin:0 0;">BRUGNATO</div>
<div class="t" style="left:378.21px;top:482.00px;font-size:11.2px;color:#242424;font-weight:normal;transform:scaleX(0.8950);transform-origin:0 0;">19020</div>
<div class="t" style="left:408.85px;top:482.00px;font-size:11.2px;color:#242424;font-weight:normal;transform:scaleX(0.8950);transform-origin:0 0;">SP</div>
<div class="t" style="left:658.38px;top:482.00px;font-size:11.2px;color:#242424;font-weight:normal;transform:scaleX(0.8950);transform-origin:0 0;">LUNA</div>
<div class="t" style="left:753.07px;top:482.00px;font-size:11.2px;color:#242424;font-weight:normal;transform:scaleX(0.8950);transform-origin:0 0;">CANE</div>
<div class="t" style="left:796.97px;top:482.00px;font-size:11.2px;color:#242424;font-weight:normal;transform:scaleX(0.8950);transform-origin:0 0;">DOBERMANN</div>
<div class="t" style="left:908.04px;top:482.00px;font-size:11.2px;color:#242424;font-weight:normal;transform:scaleX(0.8950);transform-origin:0 0;">22/11/2006</div>
<div class="t" style="left:960.99px;top:482.00px;font-size:11.2px;color:#242424;font-weight:normal;transform:scaleX(0.8950);transform-origin:0 0;">NO</div>
<div class="t" style="left:88.27px;top:495.00px;font-size:11.2px;color:#242424;font-weight:normal;transform:scaleX(0.8950);transform-origin:0 0;">GIANLUCA</div>
<div class="t" style="left:261.77px;top:495.00px;font-size:11.2px;color:#242424;font-weight:normal;transform:scaleX(0.8950);transform-origin:0 0;">CARRARA</div>
<div class="t" style="left:378.60px;top:495.00px;font-size:11.2px;color:#242424;font-weight:normal;transform:scaleX(0.8950);transform-origin:0 0;">54033</div>
<div class="t" style="left:408.89px;top:495.00px;font-size:11.2px;color:#242424;font-weight:normal;transform:scaleX(0.8950);transform-origin:0 0;">MS</div>
<div class="t" style="left:658.37px;top:495.00px;font-size:11.2px;color:#242424;font-weight:normal;transform:scaleX(0.8950);transform-origin:0 0;">BOBBI</div>
<div class="t" style="left:753.07px;top:495.00px;font-size:11.2px;color:#242424;font-weight:normal;transform:scaleX(0.8950);transform-origin:0 0;">CANE</div>
<div class="t" style="left:796.97px;top:495.00px;font-size:11.2px;color:#242424;font-weight:normal;transform:scaleX(0.8950);transform-origin:0 0;">DOBERMANN</div>
<div class="t" style="left:907.81px;top:495.00px;font-size:11.2px;color:#242424;font-weight:normal;transform:scaleX(0.8950);transform-origin:0 0;">01/01/2007</div>
<div class="t" style="left:960.99px;top:495.00px;font-size:11.2px;color:#242424;font-weight:normal;transform:scaleX(0.8950);transform-origin:0 0;">NO</div>
<div class="t" style="left:88.19px;top:509.00px;font-size:11.2px;color:#242424;font-weight:normal;transform:scaleX(0.8950);transform-origin:0 0;">MARIO</div>
<div class="t" style="left:261.69px;top:509.00px;font-size:11.2px;color:#242424;font-weight:normal;transform:scaleX(0.8950);transform-origin:0 0;">MONTIGNOSO</div>
<div class="t" style="left:378.23px;top:509.00px;font-size:11.2px;color:#242424;font-weight:normal;transform:scaleX(0.8950);transform-origin:0 0;">54038</div>
<div class="t" style="left:408.89px;top:509.00px;font-size:11.2px;color:#242424;font-weight:normal;transform:scaleX(0.8950);transform-origin:0 0;">MS</div>
<div class="t" style="left:658.37px;top:509.00px;font-size:11.2px;color:#242424;font-weight:normal;transform:scaleX(0.8950);transform-origin:0 0;">Horazio</div>
<div class="t" style="left:753.07px;top:509.00px;font-size:11.2px;color:#242424;font-weight:normal;transform:scaleX(0.8950);transform-origin:0 0;">CANE</div>
<div class="t" style="left:796.97px;top:509.00px;font-size:11.2px;color:#242424;font-weight:normal;transform:scaleX(0.8950);transform-origin:0 0;">DOBERMANN</div>
<div class="t" style="left:907.81px;top:509.00px;font-size:11.2px;color:#242424;font-weight:normal;transform:scaleX(0.8950);transform-origin:0 0;">19/01/2007</div>
<div class="t" style="left:960.99px;top:509.00px;font-size:11.2px;color:#242424;font-weight:normal;transform:scaleX(0.8950);transform-origin:0 0;">NO</div>
<div class="t" style="left:88.19px;top:523.00px;font-size:11.2px;color:#242424;font-weight:normal;transform:scaleX(0.8950);transform-origin:0 0;">MARIO</div>
<div class="t" style="left:261.69px;top:523.00px;font-size:11.2px;color:#242424;font-weight:normal;transform:scaleX(0.8950);transform-origin:0 0;">MILANO</div>
<div class="t" style="left:378.22px;top:523.00px;font-size:11.2px;color:#242424;font-weight:normal;transform:scaleX(0.8950);transform-origin:0 0;">20145</div>
<div class="t" style="left:408.89px;top:523.00px;font-size:11.2px;color:#242424;font-weight:normal;transform:scaleX(0.8950);transform-origin:0 0;">MI</div>
<div class="t" style="left:658.37px;top:523.00px;font-size:11.2px;color:#242424;font-weight:normal;transform:scaleX(0.8950);transform-origin:0 0;">Horazio</div>
<div class="t" style="left:753.07px;top:523.00px;font-size:11.2px;color:#242424;font-weight:normal;transform:scaleX(0.8950);transform-origin:0 0;">CANE</div>
<div class="t" style="left:796.97px;top:523.00px;font-size:11.2px;color:#242424;font-weight:normal;transform:scaleX(0.8950);transform-origin:0 0;">DOBERMANN</div>
<div class="t" style="left:907.81px;top:523.00px;font-size:11.2px;color:#242424;font-weight:normal;transform:scaleX(0.8950);transform-origin:0 0;">19/01/2007</div>
<div class="t" style="left:960.99px;top:523.00px;font-size:11.2px;color:#242424;font-weight:normal;transform:scaleX(0.8950);transform-origin:0 0;">NO</div>
<div class="t" style="left:88.17px;top:536.00px;font-size:11.2px;color:#242424;font-weight:normal;transform:scaleX(0.8950);transform-origin:0 0;">ELENA</div>
<div class="t" style="left:261.67px;top:536.00px;font-size:11.2px;color:#242424;font-weight:normal;transform:scaleX(0.8950);transform-origin:0 0;">FOLLO</div>
<div class="t" style="left:378.21px;top:536.00px;font-size:11.2px;color:#242424;font-weight:normal;transform:scaleX(0.8950);transform-origin:0 0;">19020</div>
<div class="t" style="left:408.85px;top:536.00px;font-size:11.2px;color:#242424;font-weight:normal;transform:scaleX(0.8950);transform-origin:0 0;">SP</div>
<div class="t" style="left:658.47px;top:536.00px;font-size:11.2px;color:#242424;font-weight:normal;transform:scaleX(0.8950);transform-origin:0 0;">GILDA</div>
<div class="t" style="left:753.07px;top:536.00px;font-size:11.2px;color:#242424;font-weight:normal;transform:scaleX(0.8950);transform-origin:0 0;">CANE</div>
<div class="t" style="left:796.97px;top:536.00px;font-size:11.2px;color:#242424;font-weight:normal;transform:scaleX(0.8950);transform-origin:0 0;">DOBERMANN</div>
<div class="t" style="left:907.81px;top:536.00px;font-size:11.2px;color:#242424;font-weight:normal;transform:scaleX(0.8950);transform-origin:0 0;">04/02/2007</div>
<div class="t" style="left:960.99px;top:536.00px;font-size:11.2px;color:#242424;font-weight:normal;transform:scaleX(0.8950);transform-origin:0 0;">NO</div>
<div class="t" style="left:88.58px;top:550.00px;font-size:11.2px;color:#242424;font-weight:normal;transform:scaleX(0.8950);transform-origin:0 0;">TIZIANA</div>
<div class="t" style="left:261.77px;top:550.00px;font-size:11.2px;color:#242424;font-weight:normal;transform:scaleX(0.8950);transform-origin:0 0;">CARRARA</div>
<div class="t" style="left:378.60px;top:550.00px;font-size:11.2px;color:#242424;font-weight:normal;transform:scaleX(0.8950);transform-origin:0 0;">54033</div>
<div class="t" style="left:408.89px;top:550.00px;font-size:11.2px;color:#242424;font-weight:normal;transform:scaleX(0.8950);transform-origin:0 0;">MS</div>
<div class="t" style="left:658.47px;top:550.00px;font-size:11.2px;color:#242424;font-weight:normal;transform:scaleX(0.8950);transform-origin:0 0;">Golia</div>
<div class="t" style="left:753.07px;top:550.00px;font-size:11.2px;color:#242424;font-weight:normal;transform:scaleX(0.8950);transform-origin:0 0;">CANE</div>
<div class="t" style="left:796.97px;top:550.00px;font-size:11.2px;color:#242424;font-weight:normal;transform:scaleX(0.8950);transform-origin:0 0;">DOBERMANN</div>
<div class="t" style="left:907.81px;top:550.00px;font-size:11.2px;color:#242424;font-weight:normal;transform:scaleX(0.8950);transform-origin:0 0;">18/03/2007</div>
<div class="t" style="left:960.99px;top:550.00px;font-size:11.2px;color:#242424;font-weight:normal;transform:scaleX(0.8950);transform-origin:0 0;">NO</div>
<div class="t" style="left:88.27px;top:563.00px;font-size:11.2px;color:#242424;font-weight:normal;transform:scaleX(0.8950);transform-origin:0 0;">GIOVANNI</div>
<div class="t" style="left:261.69px;top:563.00px;font-size:11.2px;color:#242424;font-weight:normal;transform:scaleX(0.8950);transform-origin:0 0;">MASSA</div>
<div class="t" style="left:378.21px;top:563.00px;font-size:11.2px;color:#242424;font-weight:normal;transform:scaleX(0.8950);transform-origin:0 0;">54100</div>
<div class="t" style="left:408.89px;top:563.00px;font-size:11.2px;color:#242424;font-weight:normal;transform:scaleX(0.8950);transform-origin:0 0;">MS</div>
<div class="t" style="left:658.37px;top:563.00px;font-size:11.2px;color:#242424;font-weight:normal;transform:scaleX(0.8950);transform-origin:0 0;">EVA</div>
<div class="t" style="left:753.07px;top:563.00px;font-size:11.2px;color:#242424;font-weight:normal;transform:scaleX(0.8950);transform-origin:0 0;">CANE</div>
<div class="t" style="left:796.97px;top:563.00px;font-size:11.2px;color:#242424;font-weight:normal;transform:scaleX(0.8950);transform-origin:0 0;">DOBERMANN</div>
<div class="t" style="left:907.81px;top:563.00px;font-size:11.2px;color:#242424;font-weight:normal;transform:scaleX(0.8950);transform-origin:0 0;">30/04/2007</div>
<div class="t" style="left:960.99px;top:563.00px;font-size:11.2px;color:#242424;font-weight:normal;transform:scaleX(0.8950);transform-origin:0 0;">NO</div>
<div class="t" style="left:88.19px;top:577.00px;font-size:11.2px;color:#242424;font-weight:normal;transform:scaleX(0.8950);transform-origin:0 0;">MAURIZIO</div>
<div class="t" style="left:261.77px;top:577.00px;font-size:11.2px;color:#242424;font-weight:normal;transform:scaleX(0.8950);transform-origin:0 0;">CARRARA</div>
<div class="t" style="left:378.60px;top:577.00px;font-size:11.2px;color:#242424;font-weight:normal;transform:scaleX(0.8950);transform-origin:0 0;">54033</div>
<div class="t" style="left:408.89px;top:577.00px;font-size:11.2px;color:#242424;font-weight:normal;transform:scaleX(0.8950);transform-origin:0 0;">MS</div>
<div class="t" style="left:658.76px;top:577.00px;font-size:11.2px;color:#242424;font-weight:normal;transform:scaleX(0.8950);transform-origin:0 0;">JIM</div>
<div class="t" style="left:753.07px;top:577.00px;font-size:11.2px;color:#242424;font-weight:normal;transform:scaleX(0.8950);transform-origin:0 0;">CANE</div>
<div class="t" style="left:796.97px;top:577.00px;font-size:11.2px;color:#242424;font-weight:normal;transform:scaleX(0.8950);transform-origin:0 0;">DOBERMANN</div>
<div class="t" style="left:907.81px;top:577.00px;font-size:11.2px;color:#242424;font-weight:normal;transform:scaleX(0.8950);transform-origin:0 0;">01/05/2007</div>
<div class="t" style="left:960.99px;top:577.00px;font-size:11.2px;color:#242424;font-weight:normal;transform:scaleX(0.8950);transform-origin:0 0;">NO</div>
<div class="t" style="left:88.15px;top:591.00px;font-size:11.2px;color:#242424;font-weight:normal;transform:scaleX(0.8950);transform-origin:0 0;">STEFANIA</div>
<div class="t" style="left:261.69px;top:591.00px;font-size:11.2px;color:#242424;font-weight:normal;transform:scaleX(0.8950);transform-origin:0 0;">MARINA DI MASSA</div>
<div class="t" style="left:378.78px;top:591.00px;font-size:11.2px;color:#242424;font-weight:normal;transform:scaleX(0.8950);transform-origin:0 0;">54037</div>
<div class="t" style="left:408.89px;top:591.00px;font-size:11.2px;color:#242424;font-weight:normal;transform:scaleX(0.8950);transform-origin:0 0;">MS</div>
<div class="t" style="left:658.38px;top:591.00px;font-size:11.2px;color:#242424;font-weight:normal;transform:scaleX(0.8950);transform-origin:0 0;">Kiss</div>
<div class="t" style="left:753.07px;top:591.00px;font-size:11.2px;color:#242424;font-weight:normal;transform:scaleX(0.8950);transform-origin:0 0;">CANE</div>
<div class="t" style="left:796.97px;top:591.00px;font-size:11.2px;color:#242424;font-weight:normal;transform:scaleX(0.8950);transform-origin:0 0;">DOBERMANN</div>
<div class="t" style="left:907.81px;top:591.00px;font-size:11.2px;color:#242424;font-weight:normal;transform:scaleX(0.8950);transform-origin:0 0;">08/05/2007</div>
<div class="t" style="left:960.99px;top:591.00px;font-size:11.2px;color:#242424;font-weight:normal;transform:scaleX(0.8950);transform-origin:0 0;">NO</div>
<div class="t" style="left:88.27px;top:604.00px;font-size:11.2px;color:#242424;font-weight:normal;transform:scaleX(0.8950);transform-origin:0 0;">GIUSEPPINA</div>
<div class="t" style="left:261.69px;top:604.00px;font-size:11.2px;color:#242424;font-weight:normal;transform:scaleX(0.8950);transform-origin:0 0;">MASSA</div>
<div class="t" style="left:378.21px;top:604.00px;font-size:11.2px;color:#242424;font-weight:normal;transform:scaleX(0.8950);transform-origin:0 0;">54100</div>
<div class="t" style="left:408.89px;top:604.00px;font-size:11.2px;color:#242424;font-weight:normal;transform:scaleX(0.8950);transform-origin:0 0;">MS</div>
<div class="t" style="left:658.78px;top:604.00px;font-size:11.2px;color:#242424;font-weight:normal;transform:scaleX(0.8950);transform-origin:0 0;">TEO</div>
<div class="t" style="left:753.07px;top:604.00px;font-size:11.2px;color:#242424;font-weight:normal;transform:scaleX(0.8950);transform-origin:0 0;">CANE</div>
<div class="t" style="left:796.97px;top:604.00px;font-size:11.2px;color:#242424;font-weight:normal;transform:scaleX(0.8950);transform-origin:0 0;">DOBERMANN</div>
<div class="t" style="left:907.81px;top:604.00px;font-size:11.2px;color:#242424;font-weight:normal;transform:scaleX(0.8950);transform-origin:0 0;">01/06/2007</div>
<div class="t" style="left:960.99px;top:604.00px;font-size:11.2px;color:#242424;font-weight:normal;transform:scaleX(0.8950);transform-origin:0 0;">NO</div>
<div class="t" style="left:88.11px;top:618.00px;font-size:11.2px;color:#242424;font-weight:normal;transform:scaleX(0.8950);transform-origin:0 0;">IANNA</div>
<div class="t" style="left:261.67px;top:618.00px;font-size:11.2px;color:#242424;font-weight:normal;transform:scaleX(0.8950);transform-origin:0 0;">FILATTIERA</div>
<div class="t" style="left:378.60px;top:618.00px;font-size:11.2px;color:#242424;font-weight:normal;transform:scaleX(0.8950);transform-origin:0 0;">54023</div>
<div class="t" style="left:408.89px;top:618.00px;font-size:11.2px;color:#242424;font-weight:normal;transform:scaleX(0.8950);transform-origin:0 0;">MS</div>
<div class="t" style="left:658.35px;top:618.00px;font-size:11.2px;color:#242424;font-weight:normal;transform:scaleX(0.8950);transform-origin:0 0;">SAKE</div>
<div class="t" style="left:753.07px;top:618.00px;font-size:11.2px;color:#242424;font-weight:normal;transform:scaleX(0.8950);transform-origin:0 0;">CANE</div>
<div class="t" style="left:796.97px;top:618.00px;font-size:11.2px;color:#242424;font-weight:normal;transform:scaleX(0.8950);transform-origin:0 0;">DOBERMANN</div>
<div class="t" style="left:907.81px;top:618.00px;font-size:11.2px;color:#242424;font-weight:normal;transform:scaleX(0.8950);transform-origin:0 0;">01/07/2007</div>
<div class="t" style="left:960.99px;top:618.00px;font-size:11.2px;color:#242424;font-weight:normal;transform:scaleX(0.8950);transform-origin:0 0;">NO</div>
<div class="t" style="left:88.11px;top:632.00px;font-size:11.2px;color:#242424;font-weight:normal;transform:scaleX(0.8950);transform-origin:0 0;">IANNA</div>
<div class="t" style="left:261.65px;top:632.00px;font-size:11.2px;color:#242424;font-weight:normal;transform:scaleX(0.8950);transform-origin:0 0;">SAN GIULIANO TERME</div>
<div class="t" style="left:378.78px;top:632.00px;font-size:11.2px;color:#242424;font-weight:normal;transform:scaleX(0.8950);transform-origin:0 0;">56017</div>
<div class="t" style="left:408.87px;top:632.00px;font-size:11.2px;color:#242424;font-weight:normal;transform:scaleX(0.8950);transform-origin:0 0;">PI</div>
<div class="t" style="left:658.35px;top:632.00px;font-size:11.2px;color:#242424;font-weight:normal;transform:scaleX(0.8950);transform-origin:0 0;">SAKE</div>
<div class="t" style="left:753.07px;top:632.00px;font-size:11.2px;color:#242424;font-weight:normal;transform:scaleX(0.8950);transform-origin:0 0;">CANE</div>
<div class="t" style="left:796.97px;top:632.00px;font-size:11.2px;color:#242424;font-weight:normal;transform:scaleX(0.8950);transform-origin:0 0;">DOBERMANN</div>
<div class="t" style="left:907.81px;top:632.00px;font-size:11.2px;color:#242424;font-weight:normal;transform:scaleX(0.8950);transform-origin:0 0;">01/07/2007</div>
<div class="t" style="left:960.99px;top:632.00px;font-size:11.2px;color:#242424;font-weight:normal;transform:scaleX(0.8950);transform-origin:0 0;">NO</div>
</body></html>
